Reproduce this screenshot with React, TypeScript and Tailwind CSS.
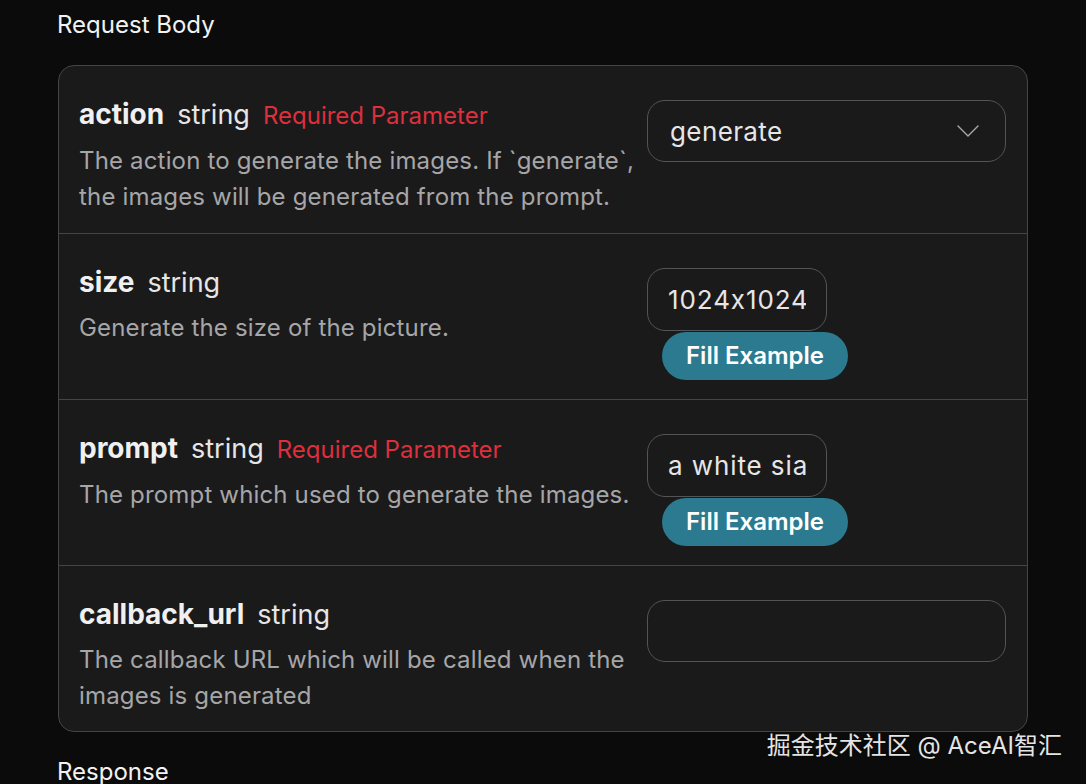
type Param = {
  name: string;
  required?: boolean;
  desc: string[];
  kind: 'select' | 'short' | 'wide';
  value?: string;
};

const params: Param[] = [
  {
    name: 'action',
    required: true,
    desc: ['The action to generate the images. If `generate`,', 'the images will be generated from the prompt.'],
    kind: 'select',
    value: 'generate',
  },
  { name: 'size', desc: ['Generate the size of the picture.'], kind: 'short', value: '1024x1024' },
  {
    name: 'prompt',
    required: true,
    desc: ['The prompt which used to generate the images.'],
    kind: 'short',
    value: 'a white siamese cat',
  },
  {
    name: 'callback_url',
    desc: ['The callback URL which will be called when the', 'images is generated'],
    kind: 'wide',
  },
];

function Field({ p }: { p: Param }) {
  if (p.kind === 'select') {
    return (
      <div className="flex h-[62px] w-[359px] items-center justify-between rounded-[18px] border-[1.5px] border-[#545456] pl-[22px] pr-[26px] text-[26px] tracking-[0.015em] text-[#e6e6e6]">
        <span>{p.value}</span>
        <svg width="22" height="12" viewBox="0 0 22 12" fill="none" className="text-[#a8a8a8]">
          <path d="M1 1l10 10L21 1" stroke="currentColor" strokeWidth="1.4" strokeLinecap="round" strokeLinejoin="round" />
        </svg>
      </div>
    );
  }
  if (p.kind === 'wide') {
    return <div className="h-[62px] w-[359px] rounded-[18px] border-[1.5px] border-[#545456]" />;
  }
  return (
    <div className="flex flex-col items-start gap-px">
      <div className="flex h-[63px] w-[180px] items-center overflow-hidden whitespace-nowrap rounded-[18px] border-[1.5px] border-[#545456] pl-[20px] pr-[20px] text-[26px] tracking-[0.035em] text-[#e6e6e6]">
        <span className="block w-full overflow-hidden">{p.value}</span>
      </div>
      <button className="ml-[15px] flex h-[48px] items-center rounded-full bg-[#2b7a90] px-[24px] text-[24px] font-semibold text-white">
        Fill Example
      </button>
    </div>
  );
}

export default function App() {
  return (
    <div
      className="relative h-[784px] overflow-hidden bg-[#0b0b0b] px-[58px] pt-[9px]"
      style={{ fontFamily: 'Inter, "Noto Sans CJK SC", sans-serif', fontFeatureSettings: '"calt" 0' }}
    >
      <h2 className="-ml-px text-[24px] leading-[32px] text-[#f2f2f2]">Request Body</h2>

      <div className="mt-[24px] overflow-hidden rounded-[16px] border-[1.5px] border-[#454547] bg-[#1a1a1b]">
        {params.map((p, i) => (
          <div
            key={p.name}
            className={`flex items-start justify-between pl-[20px] pr-[21px] pt-[30px] ${
              i > 0 ? 'h-[166px] border-t-[1.5px] border-[#454547]' : 'h-[167px]'
            }`}
          >
            <div className="min-w-0 whitespace-nowrap">
              <div className="flex items-baseline leading-[36px]">
                <span className="text-[28px] font-bold text-[#f0f0f0]">{p.name}</span>
                <span className="ml-[13px] text-[27px] text-[#e6e6e6]">string</span>
                {p.required && (
                  <span className="ml-[13px] text-[24px] text-[#dd2f3c]">Required Parameter</span>
                )}
              </div>
              <div className="mt-[9px] text-[24px] leading-[36px] tracking-[0.007em] text-[#a6a6a8]">
                {p.desc.map((d) => (
                  <div key={d}>{d}</div>
                ))}
              </div>
            </div>
            <div className="mt-[4px] w-[359px] shrink-0">
              <Field p={p} />
            </div>
          </div>
        ))}
      </div>

      <h2 className="-ml-px mt-[24px] text-[24px] leading-[32px] text-[#f2f2f2]">Response</h2>

      <div className="absolute right-[24px] top-[730px] text-[24px] leading-[32px] text-[#e4e4e4] [text-shadow:0_0_2px_rgba(0,0,0,0.6)]">
        掘金技术社区 @ AceAI智汇
      </div>
    </div>
  );
}
